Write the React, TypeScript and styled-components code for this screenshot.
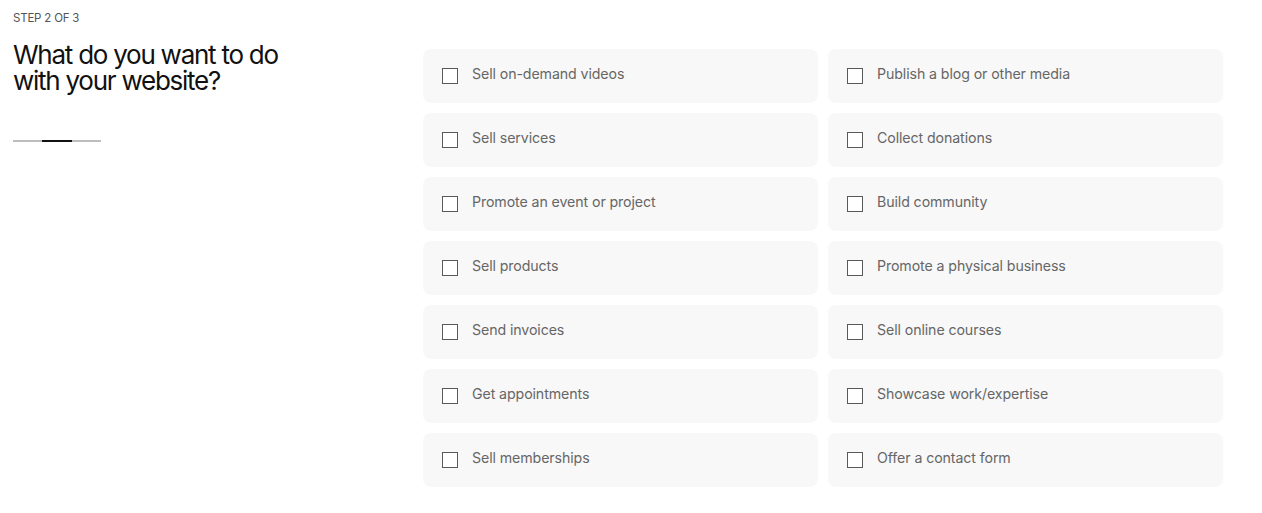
import React from "react";
import styled, { createGlobalStyle } from "styled-components";

const Global = createGlobalStyle`
  html, body { margin: 0; padding: 0; background: #fff; }
  body { font-family: Inter, "Liberation Sans", sans-serif; -webkit-font-smoothing: antialiased; }
  * { box-sizing: border-box; }
`;

const Page = styled.div`
  display: grid;
  grid-template-columns: 410px 800px;
  padding: 11px 0 0 13px;
  width: 1262px;
  height: 513px;
`;

const Intro = styled.div`
  display: flex;
  flex-direction: column;
`;

const Step = styled.div`
  font-size: 11.5px;
  line-height: 14px;
  color: #555;
  text-transform: uppercase;
  letter-spacing: -0.2px;
`;

const Title = styled.h1`
  margin: 17px 0 0;
  font-size: 26px;
  line-height: 26px;
  font-weight: 400;
  letter-spacing: -1.25px;
  color: #111;
`;

const Progress = styled.div`
  display: flex;
  margin-top: 46px;
  width: 88px;
`;

const Segment = styled.div<{ $active?: boolean }>`
  flex: 1;
  height: 2px;
  background: ${(p) => (p.$active ? "#111" : "#bdbdbd")};
`;

const Options = styled.div`
  display: grid;
  grid-template-columns: 395px 395px;
  column-gap: 10px;
  row-gap: 10px;
  margin-top: 38px;
  align-content: start;
`;

const Card = styled.label`
  display: flex;
  align-items: center;
  height: 54px;
  padding: 0 19px;
  background: #f8f8f8;
  border-radius: 8px;
  cursor: pointer;
`;

const Box = styled.span`
  width: 16px;
  height: 16px;
  border: 1px solid #595959;
  background: #fff;
  flex-shrink: 0;
  margin-top: -1px;
`;

const Label = styled.span`
  margin-left: 14px;
  font-size: 14.2px;
  line-height: 20px;
  color: #666;
  letter-spacing: -0.1px;
  margin-top: -5px;
`;

const options = [
  "Sell on-demand videos",
  "Publish a blog or other media",
  "Sell services",
  "Collect donations",
  "Promote an event or project",
  "Build community",
  "Sell products",
  "Promote a physical business",
  "Send invoices",
  "Sell online courses",
  "Get appointments",
  "Showcase work/expertise",
  "Sell memberships",
  "Offer a contact form",
];

export default function App() {
  return (
    <>
      <Global />
      <Page>
        <Intro>
          <Step>Step 2 of 3</Step>
          <Title>
            What do you want to do
            <br />
            with your website?
          </Title>
          <Progress>
            <Segment />
            <Segment $active />
            <Segment />
          </Progress>
        </Intro>
        <Options>
          {options.map((o) => (
            <Card key={o}>
              <Box />
              <Label>{o}</Label>
            </Card>
          ))}
        </Options>
      </Page>
    </>
  );
}
